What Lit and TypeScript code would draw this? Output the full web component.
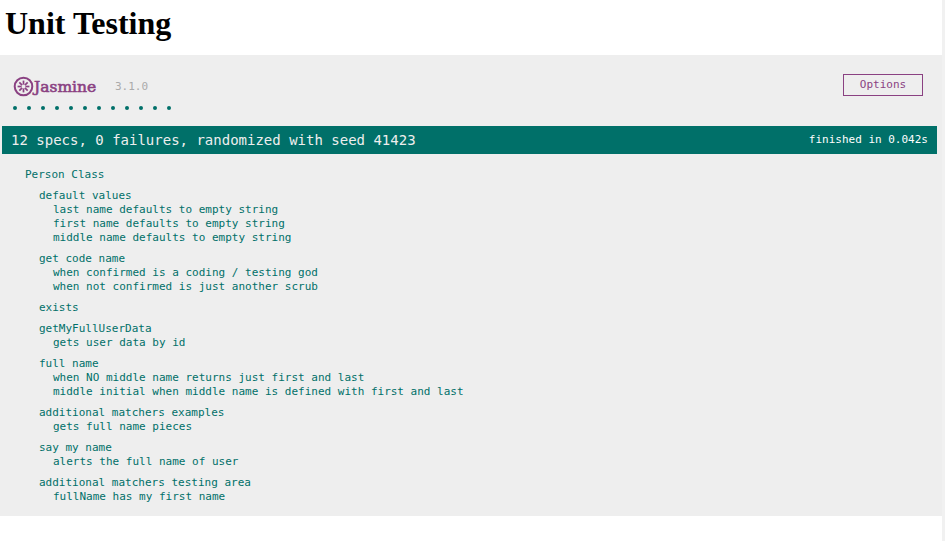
import { LitElement, css, html, svg } from "lit";
import { customElement } from "lit/decorators.js";

type Suite = { name: string; specs: string[] };

const SUITES: Suite[] = [
  {
    name: "default values",
    specs: [
      "last name defaults to empty string",
      "first name defaults to empty string",
      "middle name defaults to empty string",
    ],
  },
  {
    name: "get code name",
    specs: [
      "when confirmed is a coding / testing god",
      "when not confirmed is just another scrub",
    ],
  },
  { name: "exists", specs: [] },
  { name: "getMyFullUserData", specs: ["gets user data by id"] },
  {
    name: "full name",
    specs: [
      "when NO middle name returns just first and last",
      "middle initial when middle name is defined with first and last",
    ],
  },
  { name: "additional matchers examples", specs: ["gets full name pieces"] },
  { name: "say my name", specs: ["alerts the full name of user"] },
  { name: "additional matchers testing area", specs: ["fullName has my first name"] },
];

const SPEC_COUNT = 12;

@customElement("app-root")
export class AppRoot extends LitElement {
  static override styles = css`
    :host {
      display: block;
      width: 942px;
      min-height: 541px;
      border-right: 3px solid #f1f1f1;
      font-family: "Liberation Serif", serif;
    }
    h1 {
      margin: 0;
      padding: 5px 0 0 5px;
      height: 55px;
      box-sizing: border-box;
      font-size: 32px;
      line-height: 37px;
      font-weight: bold;
      color: #000;
    }
    .reporter {
      background: #eee;
      padding: 5px 5px 5px 2px;
      height: 461px;
      box-sizing: border-box;
      font-family: "DejaVu Sans Mono", monospace;
      font-size: 11px;
      line-height: 14px;
      color: #333;
    }
    .banner {
      display: flex;
      align-items: flex-start;
      padding: 14px 14px 0 11px;
      height: 39px;
      box-sizing: border-box;
    }
    .logo {
      display: flex;
      align-items: center;
      height: 25px;
      width: 90px;
      color: #8a4182;
    }
    .logo span {
      font-family: "DejaVu Serif", serif;
      font-size: 15.5px;
      -webkit-text-stroke: 0.6px #8a4182;
    }
    .version {
      margin: 6px 0 0 12px;
      color: #aaa;
    }
    .options {
      margin-left: auto;
      width: 80px;
      height: 22px;
      box-sizing: border-box;
      border: 1px solid #8a4182;
      color: #8a4182;
      text-align: center;
      line-height: 20px;
    }
    .dots {
      display: flex;
      gap: 8px;
      height: 14px;
      padding: 6px 0 0 10px;
      box-sizing: border-box;
    }
    .dots i {
      width: 6px;
      height: 6px;
      position: relative;
    }
    .dots i::after {
      content: "";
      position: absolute;
      inset: 1px;
      border-radius: 50%;
      background: #007069;
    }
    .bar {
      display: flex;
      justify-content: space-between;
      margin-top: 13px;
      height: 28px;
      padding: 0 9px;
      background: #007069;
      color: #eee;
      font-size: 14px;
      line-height: 28px;
    }
    .duration {
      color: #fff;
      font-size: 11px;
      line-height: 27px;
    }
    .summary {
      margin-top: 14px;
      padding-left: 23px;
      color: #007069;
    }
    .suite {
      margin-top: 7px;
      padding-left: 14px;
    }
    .spec {
      padding-left: 14px;
    }
  `;

  private logo() {
    const spokes = [0, 45, 90, 135, 180, 225, 270, 315];
    return html`<svg width="21" height="21" viewBox="0 0 21 21" aria-hidden="true">
      <circle cx="10.5" cy="10.5" r="8.8" fill="none" stroke="#8a4182" stroke-width="2"></circle>
      ${spokes.map(
        (a) => svg`<path d="M10.5 8.6V4.6" transform="rotate(${a} 10.5 10.5)" stroke="#8a4182" stroke-width="1.7"></path>`,
      )}
    </svg>`;
  }

  override render() {
    return html`
      <h1>Unit Testing</h1>
      <div class="reporter">
        <div class="banner">
          <div class="logo">${this.logo()}<span>Jasmine</span></div>
          <div class="version">3.1.0</div>
          <div class="options">Options</div>
        </div>
        <div class="dots">${Array.from({ length: SPEC_COUNT }, () => html`<i></i>`)}</div>
        <div class="bar">
          <span>12 specs, 0 failures, randomized with seed 41423</span>
          <span class="duration">finished in 0.042s</span>
        </div>
        <div class="summary">
          <div>Person Class</div>
          ${SUITES.map(
            (s) => html`<div class="suite">
              <div>${s.name}</div>
              ${s.specs.map((t) => html`<div class="spec">${t}</div>`)}
            </div>`,
          )}
        </div>
      </div>
    `;
  }
}
